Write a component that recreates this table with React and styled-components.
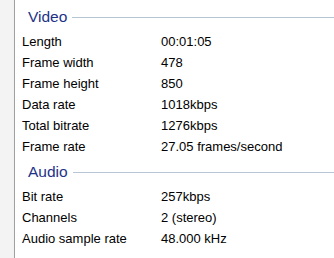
import styled, { createGlobalStyle } from 'styled-components'

const GlobalStyle = createGlobalStyle`
    html, body {
        margin: 0;
        padding: 0;
        background: #ffffff;
    }
    body {
        font-family: "Liberation Sans", Arial, sans-serif;
    }
`

const Pane = styled.div`
    display: flex;
    height: 258px;
    overflow: hidden;
`

const Gutter = styled.div`
    width: 14px;
    flex: none;
    background: #f3f3f3;
    border-right: 1px solid #a0a0a0;
`

const Details = styled.div`
    flex: 1;
    padding-top: 6px;
`

const Section = styled.section`
    & + & {
        margin-top: 4px;
    }
`

const Heading = styled.div`
    display: flex;
    align-items: center;
    gap: 5px;
    height: 22px;
    margin-bottom: 3px;
    padding-left: 13px;
    color: #1e3287;
    font-size: 15.5px;
    &::after {
        content: '';
        flex: 1;
        height: 1px;
        background: #b6c6d4;
    }
`

const Row = styled.div`
    display: grid;
    grid-template-columns: 139px 1fr;
    height: 21px;
    align-items: center;
    padding-left: 7px;
    font-size: 13px;
    color: #000;
    white-space: nowrap;
`

const sections = [
    {
        title: 'Video',
        rows: [
            ['Length', '00:01:05'],
            ['Frame width', '478'],
            ['Frame height', '850'],
            ['Data rate', '1018kbps'],
            ['Total bitrate', '1276kbps'],
            ['Frame rate', '27.05 frames/second'],
        ],
    },
    {
        title: 'Audio',
        rows: [
            ['Bit rate', '257kbps'],
            ['Channels', '2 (stereo)'],
            ['Audio sample rate', '48.000 kHz'],
        ],
    },
]

export default function App() {
    return (
        <>
            <GlobalStyle />
            <Pane>
                <Gutter />
                <Details>
                    {sections.map((s) => (
                        <Section key={s.title}>
                            <Heading>{s.title}</Heading>
                            {s.rows.map(([name, value]) => (
                                <Row key={name}>
                                    <span>{name}</span>
                                    <span>{value}</span>
                                </Row>
                            ))}
                        </Section>
                    ))}
                </Details>
            </Pane>
        </>
    )
}
